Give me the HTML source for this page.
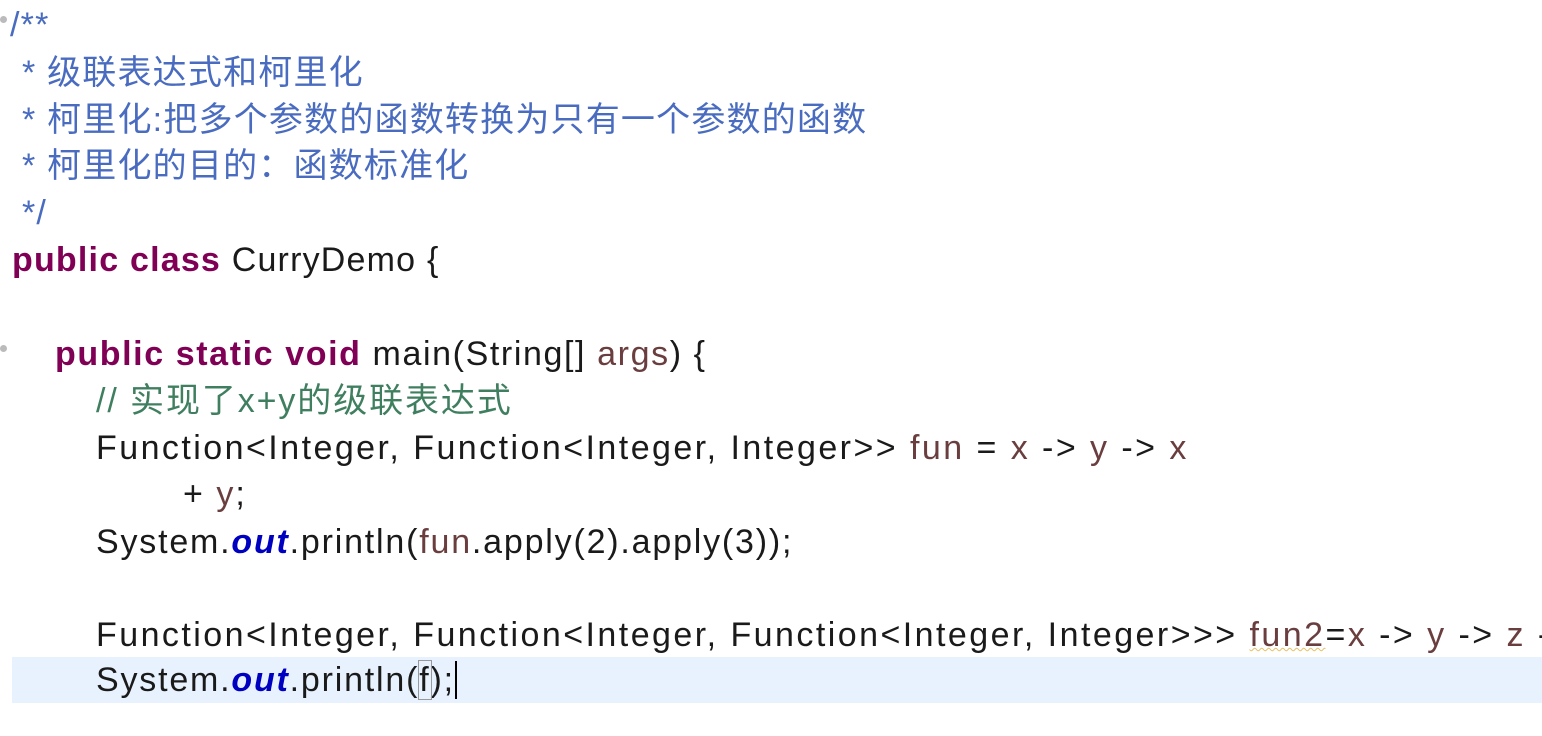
<!DOCTYPE html>
<html><head><meta charset="utf-8"><style>
body{margin:0;width:1542px;height:736px;background:#fff;overflow:hidden;position:relative;font-family:"Liberation Sans","Noto Sans CJK SC",sans-serif;font-size:34px;color:#1a1a1a}
.l{position:absolute;white-space:pre;line-height:47px;height:47px;margin-top:2px}
.c{color:#4a6cc0;letter-spacing:1.2px}.k{color:#7f0055;font-weight:bold}.g{color:#3f7f5f}.v{color:#6a3e3e}.o{color:#0000c0;font-weight:bold;font-style:italic}
.hl{position:absolute;left:12px;top:657px;width:1530px;height:46px;background:#e8f2fe}
.dot{position:absolute;left:0;width:7px;height:7px;border-radius:50%;background:#bbb}
</style></head><body>
<div class="hl"></div>
<div class="dot" style="top:16px"></div>
<div class="dot" style="top:345px"></div>
<div class="l c" style="left:10px;top:0px">/**</div>
<div class="l c" style="left:22px;top:48px">* 级联表达式和柯里化</div>
<div class="l c" style="left:22px;top:95px">* 柯里化:把多个参数的函数转换为只有一个参数的函数</div>
<div class="l c" style="left:22px;top:141px">* 柯里化的目的：函数标准化</div>
<div class="l c" style="left:22px;top:188px">*/</div>
<div class="l" style="left:12px;top:235px;letter-spacing:1.2px"><span class="k">public class</span> CurryDemo {</div>
<div class="l" style="left:55px;top:329px;letter-spacing:1.6px"><span class="k">public static void</span> main(String[] <span class="v">args</span>) {</div>
<div class="l g" style="left:96px;top:376px;letter-spacing:1.9px">// 实现了x+y的级联表达式</div>
<div class="l" style="left:96px;top:423px;letter-spacing:2.45px">Function&lt;Integer, Function&lt;Integer, Integer&gt;&gt; <span class="v">fun</span> = <span class="v">x</span> -&gt; <span class="v">y</span> -&gt; <span class="v">x</span></div>
<div class="l" style="left:183px;top:469px;letter-spacing:2px">+ <span class="v">y</span>;</div>
<div class="l" style="left:96px;top:517px;letter-spacing:1.8px">System.<span class="o">out</span>.println(<span class="v">fun</span>.apply(2).apply(3));</div>
<div class="l" style="left:96px;top:610px;letter-spacing:2.45px">Function&lt;Integer, Function&lt;Integer, Function&lt;Integer, Integer&gt;&gt;&gt; <span class="v" style="text-decoration:underline wavy #e8c060;text-decoration-thickness:1px">fun2</span>=<span class="v">x</span> -&gt; <span class="v">y</span> -&gt; <span class="v">z</span> -</div>
<div class="l" style="left:96px;top:655px;letter-spacing:1.8px">System.<span class="o">out</span>.println(<span style="outline:1px solid #999">f</span>)<span style="border-right:2px solid #000">;</span></div>
</body></html>
